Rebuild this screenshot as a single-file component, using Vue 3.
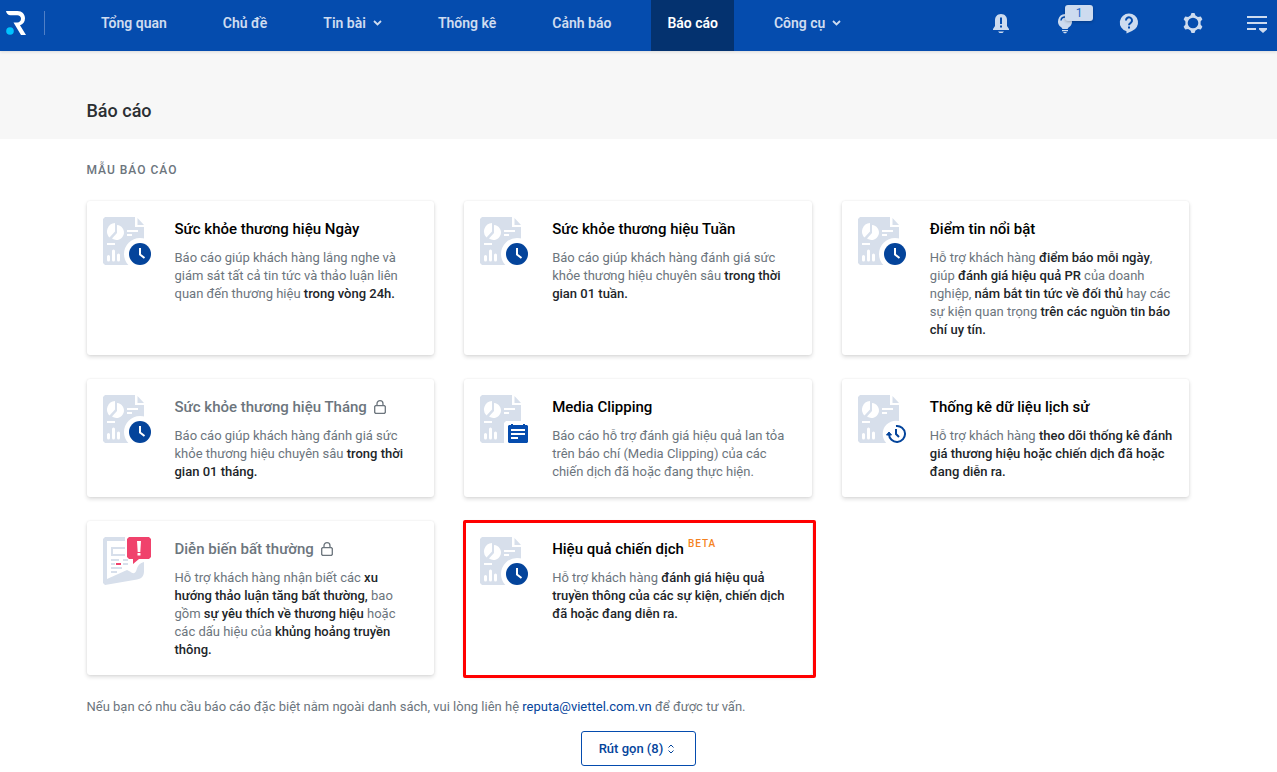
<script setup>
const navItems = [
  { label: 'Tổng quan' },
  { label: 'Chủ đề' },
  { label: 'Tin bài', menu: true },
  { label: 'Thống kê' },
  { label: 'Cảnh báo' },
  { label: 'Báo cáo', active: true },
  { label: 'Công cụ', menu: true },
]

const reports = [
  {
    title: 'Sức khỏe thương hiệu Ngày',
    icon: 'clock',
    text: [['Báo cáo giúp khách hàng lắng nghe và giám sát tất cả tin tức và thảo luận liên quan đến thương hiệu '], ['trong vòng 24h.', true]],
  },
  {
    title: 'Sức khỏe thương hiệu Tuần',
    icon: 'clock',
    text: [['Báo cáo giúp khách hàng đánh giá sức khỏe thương hiệu chuyên sâu '], ['trong thời gian 01 tuần.', true]],
  },
  {
    title: 'Điểm tin nổi bật',
    icon: 'clock',
    text: [
      ['Hỗ trợ khách hàng '], ['điểm báo mỗi ngày', true], [', giúp '], ['đánh giá hiệu quả PR', true],
      [' của doanh nghiệp, '], ['nắm bắt tin tức về đối thủ', true], [' hay các sự kiện quan trọng '],
      ['trên các nguồn tin báo chí uy tín.', true],
    ],
  },
  {
    title: 'Sức khỏe thương hiệu Tháng',
    icon: 'clock',
    locked: true,
    text: [['Báo cáo giúp khách hàng đánh giá sức khỏe thương hiệu chuyên sâu '], ['trong thời gian 01 tháng.', true]],
  },
  {
    title: 'Media Clipping',
    icon: 'note',
    text: [['Báo cáo hỗ trợ đánh giá hiệu quả lan tỏa trên báo chí (Media Clipping) của các chiến dịch đã hoặc đang thực hiện.']],
  },
  {
    title: 'Thống kê dữ liệu lịch sử',
    icon: 'history',
    text: [['Hỗ trợ khách hàng '], ['theo dõi thống kê đánh giá thương hiệu hoặc chiến dịch đã hoặc đang diễn ra.', true]],
  },
  {
    title: 'Diễn biến bất thường',
    icon: 'alert',
    locked: true,
    text: [
      ['Hỗ trợ khách hàng nhận biết các '], ['xu hướng thảo luận tăng bất thường,', true], [' bao gồm '],
      ['sự yêu thích về thương hiệu', true], [' hoặc các dấu hiệu của '], ['khủng hoảng truyền thông.', true],
    ],
  },
  {
    title: 'Hiệu quả chiến dịch',
    icon: 'clock',
    beta: true,
    marked: true,
    text: [['Hỗ trợ khách hàng '], ['đánh giá hiệu quả truyền thông của các sự kiện, chiến dịch đã hoặc đang diễn ra.', true]],
  },
]
</script>

<template>
  <div class="page">
    <header class="topbar">
      <a class="logo" href="#" aria-label="Trang chủ">
        <svg width="20" height="24" viewBox="0 0 20 24" aria-hidden="true">
          <path fill="#fff" d="M0 0H11.500C16 0 19 3.200 19 7.200C19 10.600 17 13.200 14 14.200L20 24H15L7.500 11.500H11.300C13.600 11.500 15 9.800 15 7.800C15 5.600 13.400 4.200 11.300 4.200H4.500C2 4.200 0.500 2.500 0 0Z" />
          <circle cx="4" cy="20" r="3.800" fill="#00c3ff" />
        </svg>
      </a>
      <nav class="nav">
        <a v-for="item in navItems" :key="item.label" href="#" class="nav-item" :class="{ active: item.active }">
          {{ item.label }}
          <svg v-if="item.menu" width="9" height="6" viewBox="0 0 9 6" aria-hidden="true">
            <path d="M1 1L4.500 4.500L8 1" fill="none" stroke="currentColor" stroke-width="1.800" />
          </svg>
        </a>
      </nav>
      <div class="tools">
        <button type="button" class="tool" aria-label="Cảnh báo mới">
          <svg width="24" height="24" viewBox="0 0 24 24" aria-hidden="true">
            <path fill="currentColor" fill-rule="evenodd" d="M12 3C8 3 6 6 6 9V15L4 18V19H20V18L18 15V9C18 6 16 3 12 3ZM11 6.500H13V13H11ZM11 14.500H13V16.500H11Z" />
            <path fill="currentColor" d="M9 20.500H15L13.500 22H10.500Z" />
          </svg>
        </button>
        <button type="button" class="tool" aria-label="Gợi ý">
          <svg width="24" height="24" viewBox="0 0 24 24" aria-hidden="true">
            <path fill="currentColor" d="M12 3A7.300 7.300 0 0 0 8.500 16.500L9.500 18H14.500L15.500 16.500A7.300 7.300 0 0 0 12 3ZM9 19H15V20.200H9ZM10 21H14L13 22.200H11Z" />
            <path d="M8 9.500A4 4 0 0 1 12 6" fill="none" stroke="#054cae" stroke-width="1.600" />
          </svg>
          <span class="badge">1</span>
        </button>
        <button type="button" class="tool" aria-label="Trợ giúp">
          <svg width="24" height="24" viewBox="0 0 24 24" aria-hidden="true">
            <path fill="currentColor" d="M12 2.500A9 9 0 0 0 9.500 20.200V22.500L15 20A9 9 0 0 0 12 2.500Z" />
            <path d="M9 9.500A3 3 0 1 1 14 11.600C12.700 12.500 12 12.900 12 14.300M12 15.500V17.500" fill="none" stroke="#054cae" stroke-width="2" />
          </svg>
        </button>
        <button type="button" class="tool" aria-label="Cài đặt">
          <svg width="24" height="24" viewBox="0 0 24 24" aria-hidden="true">
            <path fill="currentColor" fill-rule="evenodd" d="M10.500 2H13.500L14.500 4.600L16.900 6L19.800 5.600L21.400 8.200L19.600 10.500V13.500L21.400 15.800L19.800 18.400L16.900 18L14.500 19.400L13.500 22H10.500L9.500 19.400L7.100 18L4.200 18.400L2.600 15.800L4.400 13.500V10.500L2.600 8.200L4.200 5.600L7.100 6L9.500 4.600ZM12 6.700A5.300 5.300 0 1 0 12 17.300A5.300 5.300 0 1 0 12 6.700Z" />
          </svg>
        </button>
        <button type="button" class="tool" aria-label="Trình đơn">
          <svg width="24" height="24" viewBox="0 0 24 24" aria-hidden="true">
            <path fill="currentColor" d="M2 5H22V7H2ZM2 11H22V13H2ZM2 17H11V19H2ZM14 17H22V18.500L18 22L14 18.500Z" />
          </svg>
        </button>
      </div>
    </header>

    <div class="heading">
      <div class="container">
        <h1>Báo cáo</h1>
      </div>
    </div>

    <main class="container content">
      <h2>Mẫu báo cáo</h2>
      <div class="grid">
        <article v-for="r in reports" :key="r.title" class="card" :class="{ locked: r.locked, marked: r.marked }">
          <svg class="art" width="48" height="48" viewBox="0 0 48 48" aria-hidden="true">
            <g v-if="r.icon === 'alert'">
              <path fill="#d7dfeb" d="M2 0H22V4H4V42L24 33L27 34.500C30 37 32 37 33.500 33C35 28 37 26 41 25V34C41 39 39 41.500 34 42.500L2 48L0 46V2Z" />
              <path d="M22 11H9V18H22" fill="none" stroke="#d7dfeb" stroke-width="2" />
              <path fill="#d7dfeb" d="M8 22H16V24H8ZM20 22H25V24H20ZM8 26H12V28H8ZM20 26H25V28H20ZM8 30H19V32H8ZM8 34H14V36H8Z" />
              <path fill="#f0426c" d="M13 26H18V28H13ZM26 0H46L48 2V20L46 22H36L30 27V22H26L24 20V2Z" />
              <path fill="#fff" d="M34 4H38L37.300 15H34.700ZM34.500 16H37.500V18.500H34.500Z" />
            </g>
            <g v-else>
              <path fill="#d7dfeb" d="M2 0H32V10H41V48H2L0 46V2ZM34.500 1L41 8H34.500Z" />
              <path fill="#fff" d="M12 6V14.500L6.500 20.500A8.500 8.500 0 0 1 12 6ZM14 8A7.500 7.500 0 1 1 9 21.500L14 16ZM24 13H35V15H24ZM24 17H29V19H24ZM4 26H12V28H4Z" />
              <path d="M5.500 39.500V43M10.500 34V43M15.500 38V43" stroke="#fff" stroke-width="3" stroke-linecap="round" />
              <g v-if="r.icon === 'clock'">
                <circle cx="37" cy="37" r="16" fill="#fff" />
                <circle cx="37" cy="37" r="11" fill="#04449b" />
                <path d="M37 31V37.500L41.500 41" fill="none" stroke="#fff" stroke-width="2" />
              </g>
              <g v-else-if="r.icon === 'note'">
                <path fill="#fff" d="M26 26H48V48H24V28Z" />
                <path fill="#054cae" d="M29 30H31V29H33V30H43V29H45V30H47L48 31V47L47 48H29L28 47V31Z" />
                <path fill="#fff" d="M31 34H45V36H31ZM31 38H45V40H31ZM31 42H38V44H31Z" />
              </g>
              <g v-else>
                <circle cx="38" cy="39" r="13.300" fill="#fff" />
                <path d="M38 31A8 8 0 1 1 31 39" fill="none" stroke="#04449b" stroke-width="2" />
                <path d="M38 34V39L41 42" fill="none" stroke="#04449b" stroke-width="2" />
                <path d="M28.500 40L31 37L33.500 40Z" fill="#04449b" stroke="#04449b" />
              </g>
            </g>
          </svg>
          <div class="body">
            <h3>
              {{ r.title }}
              <svg v-if="r.locked" width="12" height="14" viewBox="0 0 12 14" role="img" aria-label="Đã khóa">
                <path d="M1.500 5.700H10.500L11.300 6.500V12.500L10.500 13.300H1.500L0.700 12.500V6.500ZM3 5.700V3.700A3 3 0 0 1 9 3.700V5.700" fill="none" stroke="currentColor" stroke-width="1.300" />
              </svg>
              <span v-if="r.beta" class="beta">BETA</span>
            </h3>
            <p>
              <template v-for="(part, i) in r.text" :key="i"><strong v-if="part[1]">{{ part[0] }}</strong><template v-else>{{ part[0] }}</template></template>
            </p>
          </div>
        </article>
      </div>
      <p class="contact">Nếu bạn có nhu cầu báo cáo đặc biệt nằm ngoài danh sách, vui lòng liên hệ <a href="mailto:reputa@viettel.com.vn">reputa@viettel.com.vn</a> để được tư vấn.</p>
      <button type="button" class="collapse">
        Rút gọn (8)
        <svg width="8" height="10" viewBox="0 0 8 10" aria-hidden="true">
          <path d="M1.500 3.500L4 1L6.500 3.500M1.500 6.500L4 9L6.500 6.500" fill="none" stroke="currentColor" />
        </svg>
      </button>
    </main>
  </div>
</template>

<style>
body {
  margin: 0;
  background: #fff;
}
</style>

<style scoped>
.page {
  font-family: Roboto, "Noto Sans", sans-serif;
  font-size: 13px;
  line-height: 18px;
  color: #6c757d;
}
h1, h2, h3, p {
  margin: 0;
}
a {
  text-decoration: none;
}
button {
  font: inherit;
  cursor: pointer;
}
.topbar {
  position: relative;
  display: flex;
  height: 51px;
  padding-right: 8px;
  background: #054cae;
  box-shadow: 0 1px 3px rgba(0, 0, 0, 0.12);
}
.logo {
  display: flex;
  align-items: center;
  align-self: flex-start;
  height: 24px;
  margin: 11px 40px 0 6px;
  padding-right: 18px;
  border-right: 1px solid #507fc6;
}
.nav {
  display: flex;
  gap: 24px;
}
.nav-item {
  display: flex;
  align-items: center;
  gap: 7px;
  padding: 0 16px 5px;
  color: #cfdcf0;
  font-size: 14px;
  font-weight: 600;
  white-space: nowrap;
}
.nav-item.active {
  background: #04326f;
  color: #fff;
}
.tools {
  display: flex;
  align-items: center;
  gap: 40px;
  margin-left: auto;
  padding-bottom: 5px;
}
.tool {
  position: relative;
  display: flex;
  padding: 0;
  border: 0;
  background: none;
  color: #cddbef;
}
.badge {
  position: absolute;
  top: -6px;
  left: 12px;
  width: 28px;
  border-radius: 3px;
  background: #cddbef;
  color: #2468ca;
  font-size: 12px;
  line-height: 16px;
  text-align: center;
  box-shadow: 0 1px 3px rgba(0, 0, 0, 0.25);
}
.heading {
  padding: 48px 0 16px;
  background: #f7f7f7;
}
.container {
  max-width: 1104px;
  margin: 0 auto;
}
h1 {
  color: #2b2f33;
  font-size: 18px;
  font-weight: 500;
  line-height: 24px;
}
.content {
  padding: 22px 0 6px;
}
h2 {
  font-size: 12px;
  font-weight: 500;
  line-height: 18px;
  letter-spacing: 1px;
  text-transform: uppercase;
}
.grid {
  display: grid;
  grid-template-columns: repeat(3, 1fr);
  gap: 24px 30px;
  margin-top: 22px;
  margin-right: 1px;
}
.card {
  position: relative;
  display: flex;
  gap: 24px;
  padding: 16px;
  border-radius: 3px;
  background: #fff;
  box-shadow: 0 2px 4px rgba(0, 0, 0, 0.14), 0 0 2px rgba(0, 0, 0, 0.08);
}
.card.marked::after {
  content: "";
  position: absolute;
  inset: -1px -4px -3px -1px;
  border: 3px solid #f00;
  border-radius: 2px;
}
.art {
  flex: none;
}
.body {
  min-width: 0;
}
h3 {
  display: flex;
  align-items: center;
  gap: 7px;
  margin-bottom: 8px;
  color: #000;
  font-size: 15px;
  font-weight: 500;
  line-height: 24px;
}
.locked h3 {
  color: #6c757d;
}
.beta {
  align-self: flex-start;
  margin-left: -3px;
  color: #f58220;
  font-size: 10px;
  font-weight: 500;
  line-height: 14px;
  letter-spacing: 1px;
}
strong {
  color: #212529;
  font-weight: 500;
}
.contact {
  margin-top: 23px;
}
.contact a {
  color: #04449b;
}
.collapse {
  display: flex;
  align-items: center;
  gap: 4px;
  margin: 15px auto 0;
  padding: 8px 20px 8px 17px;
  border: 1px solid #054cae;
  border-radius: 3px;
  background: #fff;
  color: #04449b;
  font-weight: 500;
  line-height: 17px;
}
</style>
